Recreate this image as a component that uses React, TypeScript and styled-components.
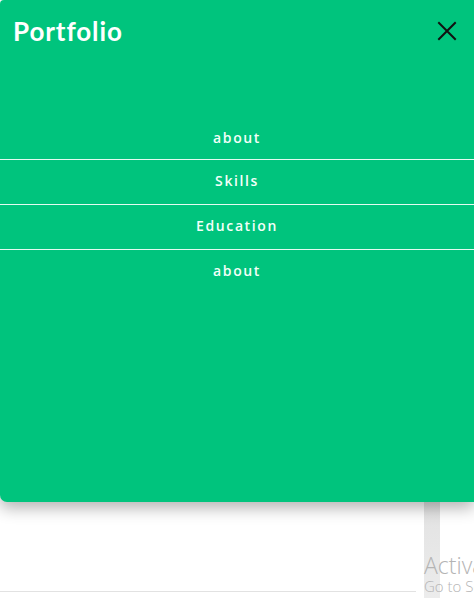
import React from 'react';
import styled, { createGlobalStyle } from 'styled-components';

const GlobalStyle = createGlobalStyle`
  html, body {
    margin: 0;
    padding: 0;
    background: #fff;
    overflow: hidden;
  }
  body {
    font-family: "Open Sans", "Liberation Sans", sans-serif;
  }
`;

const Page = styled.div`
  position: relative;
  width: 474px;
  height: 598px;
  overflow: hidden;
`;

const Panel = styled.div`
  position: relative;
  z-index: 2;
  height: 502px;
  background-color: #00c47d;
  border-radius: 4px 0 0 7px;
  box-shadow: 0 6px 16px rgba(0, 0, 0, 0.3);
`;

const Header = styled.header`
  display: flex;
  align-items: center;
  justify-content: space-between;
  height: 62px;
  padding: 0 16px 0 13px;
`;

const Logo = styled.h1`
  margin: 0;
  font-family: Lato, "Open Sans", sans-serif;
  font-size: 26px;
  font-weight: 700;
  color: #fff;
  letter-spacing: 0.9px;
`;

const CloseButton = styled.button`
  display: flex;
  padding: 0;
  border: none;
  background: transparent;
  cursor: pointer;
`;

const Nav = styled.nav`
  margin-top: 53px;
  ul {
    margin: 0;
    padding: 0;
    list-style: none;
  }
`;

const Item = styled.li<{ $divider: boolean }>`
  display: flex;
  align-items: center;
  justify-content: center;
  height: 45px;
  padding-bottom: 3px;
  box-sizing: border-box;
  border-bottom: ${(p) => (p.$divider ? '1px solid #e4fbf1' : '1px solid transparent')};
  a {
    color: #f4fff9;
    font-size: 14px;
    font-weight: 600;
    letter-spacing: 1.6px;
    text-decoration: none;
  }
  &:first-child {
    padding-bottom: 0;
  }
`;

const Below = styled.div`
  display: flex;
  height: 96px;
`;

const Content = styled.div`
  width: 416px;
  height: 89px;
  border-bottom: 1px solid #e2e2e2;
`;

const Gutter = styled.div`
  width: 16px;
  margin-left: 8px;
  background: linear-gradient(#e2e2e2, #ececec);
`;

const Watermark = styled.div`
  position: absolute;
  left: 424px;
  top: 553px;
  z-index: 1;
  font-family: "Open Sans", "Liberation Sans", sans-serif;
  color: #b4b4b4;
  white-space: nowrap;
  line-height: 1.1;
`;

const WatermarkTitle = styled.div`
  font-size: 23px;
  font-weight: 300;
`;

const WatermarkSub = styled.div`
  font-size: 15px;
  font-weight: 300;
`;

const links = ['about', 'Skills', 'Education', 'about'];

const App = () => {
  return (
    <Page>
      <GlobalStyle />
      <Panel>
        <Header>
          <Logo>Portfolio</Logo>
          <CloseButton type="button" aria-label="close">
            <svg width="22" height="22" viewBox="0 0 22 22">
              <path d="M3 3 L19 19 M19 3 L3 19" stroke="#111" strokeWidth="2" strokeLinecap="square" />
            </svg>
          </CloseButton>
        </Header>
        <Nav>
          <ul>
            {links.map((label, i) => (
              <Item key={i} $divider={i < links.length - 1}>
                <a href="#">{label}</a>
              </Item>
            ))}
          </ul>
        </Nav>
      </Panel>
      <Below>
        <Content />
        <Gutter />
      </Below>
      <Watermark>
        <WatermarkTitle>Activate Windows</WatermarkTitle>
        <WatermarkSub>Go to Settings to activate Windows.</WatermarkSub>
      </Watermark>
    </Page>
  );
};

export default App;
